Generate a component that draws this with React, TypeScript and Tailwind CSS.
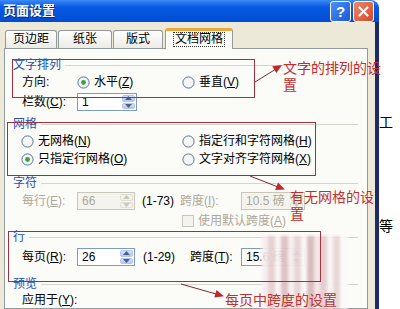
import React from 'react';

function Key({ k }: { k: string }) {
    return <>(<span className="underline">{k}</span>)</>;
}

function Radio({ checked = false }: { checked?: boolean }) {
    return (
        <svg width="13" height="13" viewBox="0 0 13 13" className="shrink-0">
            <circle cx="6.5" cy="6.5" r="5.6" fill="#F5F5F1" stroke="#56739B" strokeWidth="1" />
            {checked && <circle cx="6.5" cy="6.5" r="2.4" fill="#3E9F46" />}
        </svg>
    );
}

function Spinner({ disabled = false }: { disabled?: boolean }) {
    const half = disabled
        ? 'flex-1 flex items-center justify-center rounded-[2px] border border-[#E2E0D6] bg-[#F3F2EC]'
        : 'flex-1 flex items-center justify-center rounded-[2px] border border-[#B4C6EE] bg-linear-to-b from-[#D6E2FB] to-[#B3C7F3]';
    const fill = disabled ? '#C9C7BA' : '#4D6185';
    return (
        <div className="flex flex-col w-[15px] p-px gap-px">
            <div className={half}>
                <svg width="7" height="4" viewBox="0 0 7 4"><path d="M0 4 L3.5 0 L7 4 Z" fill={fill} /></svg>
            </div>
            <div className={half}>
                <svg width="7" height="4" viewBox="0 0 7 4"><path d="M0 0 L3.5 4 L7 0 Z" fill={fill} /></svg>
            </div>
        </div>
    );
}

function Field({ value, width, disabled = false }: { value: string; width: string; disabled?: boolean }) {
    const box = disabled
        ? 'flex h-[18px] items-stretch border border-[#C9C7BA] bg-[#F4F3EE] text-[#ACA899]'
        : 'flex h-[18px] items-stretch border border-[#7F9DB9] bg-white text-black';
    return (
        <div className={`${box} ${width}`}>
            <span className="flex-1 pl-[4px] leading-[16px] whitespace-nowrap overflow-hidden">{value}</span>
            <Spinner disabled={disabled} />
        </div>
    );
}

function Section({ title }: { title: string }) {
    return (
        <div className="flex items-center h-[16px] gap-[4px]">
            <span className="text-[#2750B0]">{title}</span>
            <div className="flex-1 h-px bg-[#D6D5C8]" />
        </div>
    );
}

const stripes = [
    'w-[6px] bg-[#F6EEEE]',
    'w-[7px] bg-[#E6CFD0]',
    'w-[6px] bg-[#FAF6F5]',
    'w-[7px] bg-[#DDBFC2]',
    'w-[6px] bg-[#F7F0EF]',
    'w-[7px] bg-[#E9D4D5]',
    'w-[6px] bg-[#FBF9F8]',
    'w-[7px] bg-[#D8B9BC]',
    'w-[6px] bg-[#F4E8E8]',
    'w-[7px] bg-[#E4CCCD]',
    'w-[6px] bg-[#FAF5F5]',
    'w-[7px] bg-[#E8D6D6]',
    'w-[8px] bg-[#FBFAFA]',
];

const App: React.FC = () => {
    return (
        <div className="relative w-[400px] h-[309px] overflow-hidden bg-white flex text-[12px] leading-[16px] text-black font-['Liberation_Sans','Noto_Sans_CJK_SC',sans-serif]">
            {/* dialog window */}
            <div className="w-[379px] h-full flex flex-col rounded-tr-[8px] overflow-hidden shrink-0">
                <div className="h-[27px] flex items-center justify-between pl-[3px] pr-[5px] bg-linear-to-b from-[#3A8AF7] via-[#0A5BE4] via-30% to-[#004BD2]">
                    <span className="text-white font-bold text-[13px] [text-shadow:1px_1px_0_#0A2A80]">页面设置</span>
                    <div className="flex gap-[2px]">
                        <div className="w-[21px] h-[21px] rounded-[3px] border border-white bg-linear-to-br from-[#4C8DF6] to-[#1B58D8] flex items-center justify-center text-white font-bold text-[15px] leading-none">?</div>
                        <div className="w-[21px] h-[21px] rounded-[3px] border border-white bg-linear-to-br from-[#EC8A66] to-[#D2442A] flex items-center justify-center">
                            <svg width="11" height="11" viewBox="0 0 11 11"><path d="M1.5 1.5 L9.5 9.5 M9.5 1.5 L1.5 9.5" stroke="#fff" strokeWidth="2.2" strokeLinecap="round" /></svg>
                        </div>
                    </div>
                </div>

                <div className="flex-1 flex flex-col bg-[#ECE9D8] pl-[4px] pr-[7px] border-r-[4px] border-r-[#1B2A6B]">
                    {/* tabs */}
                    <div className="mt-[6px] h-[20px] flex items-end gap-[1px] pl-[1px] relative z-10">
                        <div className="w-[52px] h-[18px] border border-b-0 border-[#919B9C] rounded-t-[3px] bg-linear-to-b from-white to-[#ECEBE5] text-center leading-[17px]">页边距</div>
                        <div className="w-[54px] h-[18px] border border-b-0 border-[#919B9C] rounded-t-[3px] bg-linear-to-b from-white to-[#ECEBE5] text-center leading-[17px]">纸张</div>
                        <div className="w-[50px] h-[18px] border border-b-0 border-[#919B9C] rounded-t-[3px] bg-linear-to-b from-white to-[#ECEBE5] text-center leading-[17px]">版式</div>
                        <div className="ml-px w-[68px] h-[21px] -mb-px border-x border-[#919B9C] border-t-[3px] border-t-[#F0A43A] rounded-t-[3px] bg-[#FBFBF8] flex items-start justify-center pt-[1px]">
                            <span className="border border-dotted border-[#333] px-[1px] leading-[13px]">文档网格</span>
                        </div>
                    </div>

                    {/* tab panel */}
                    <div className="flex-1 border border-[#919B9C] bg-[#FBFBF8] pl-[8px] pr-[9px] pt-[8px] overflow-hidden">
                        <Section title="文字排列" />
                        <div className="mt-[1px] h-[16px] flex items-center pl-[9px]">
                            <span className="w-[55px]">方向:</span>
                            <div className="w-[105px] flex items-center gap-[4px]">
                                <Radio checked />
                                <span>水平<Key k="Z" /></span>
                            </div>
                            <div className="flex items-center gap-[4px]">
                                <Radio />
                                <span>垂直<Key k="V" /></span>
                            </div>
                        </div>
                        <div className="mt-[3px] h-[18px] flex items-center pl-[9px]">
                            <span className="w-[55px]">栏数<Key k="C" />:</span>
                            <Field value="1" width="w-[60px]" />
                        </div>

                        <div className="mt-[5px]"><Section title="网格" /></div>
                        <div className="mt-[1px] h-[16px] flex items-center pl-[8px]">
                            <div className="w-[161px] flex items-center gap-[4px]">
                                <Radio />
                                <span>无网格<Key k="N" /></span>
                            </div>
                            <div className="flex items-center gap-[4px]">
                                <Radio />
                                <span>指定行和字符网格<Key k="H" /></span>
                            </div>
                        </div>
                        <div className="mt-[2px] h-[16px] flex items-center pl-[8px]">
                            <div className="w-[161px] flex items-center gap-[4px]">
                                <Radio checked />
                                <span>只指定行网格<Key k="O" /></span>
                            </div>
                            <div className="flex items-center gap-[4px]">
                                <Radio />
                                <span>文字对齐字符网格<Key k="X" /></span>
                            </div>
                        </div>

                        <div className="mt-[8px]"><Section title="字符" /></div>
                        <div className="mt-[1px] h-[18px] flex items-center pl-[9px] whitespace-nowrap">
                            <span className="w-[55px] text-[#ACA899]">每行<Key k="E" />:</span>
                            <Field value="66" width="w-[58px]" disabled />
                            <span className="ml-[7px] w-[38px]">(1-73)</span>
                            <span className="w-[61px] text-[#ACA899]">跨度<Key k="I" />:</span>
                            <Field value="10.5 磅" width="w-[64px]" disabled />
                        </div>
                        <div className="mt-[3px] h-[16px] flex items-center pl-[169px] gap-[4px] text-[#ACA899]">
                            <div className="w-[12px] h-[12px] border border-[#C9C7BA] bg-[#F4F3EE]" />
                            <span>使用默认跨度<Key k="A" /></span>
                        </div>

                        <Section title="行" />
                        <div className="mt-[3px] h-[18px] flex items-center pl-[9px] whitespace-nowrap">
                            <span className="w-[55px]">每页<Key k="R" />:</span>
                            <Field value="26" width="w-[58px]" />
                            <span className="ml-[8px] w-[47px]">(1-29)</span>
                            <span className="w-[51px]">跨度<Key k="T" />:</span>
                            <Field value="15.6 磅" width="w-[64px]" />
                        </div>

                        <div className="mt-[10px]"><Section title="预览" /></div>
                        <div className="h-[16px] flex items-center pl-[9px]">
                            <span>应用于<Key k="Y" />:</span>
                        </div>
                    </div>
                </div>
            </div>

            {/* document text behind the dialog */}
            <div className="flex-1 flex flex-col text-[14px] leading-[16px] pt-[114px]">
                <span>工</span>
                <span className="mt-[88px]">等</span>
            </div>

            {/* blurred watermark */}
            <div className="absolute left-[262px] top-[236px] w-[88px] h-[73px] flex blur-[1.5px] opacity-95">
                {stripes.map((s, i) => (
                    <div key={i} className={s} />
                ))}
            </div>

            {/* annotation boxes */}
            <div className="absolute left-[12px] top-[59px] w-[243px] h-[39px] border-[1.5px] border-[#A3303F]" />
            <div className="absolute left-[7px] top-[122px] w-[309px] h-[54px] border-[1.5px] border-[#A3303F]" />
            <div className="absolute left-[8px] top-[231px] w-[313px] h-[51px] border-[1.5px] border-[#A3303F]" />

            <svg className="absolute inset-0 pointer-events-none" width="400" height="309" viewBox="0 0 400 309">
                <line x1="255" y1="82" x2="276" y2="69" stroke="#7A2A32" strokeWidth="1" />
                <polygon points="282,65 276.4,73.1 272.2,66.3" fill="#C0282C" />
                <line x1="250" y1="176" x2="278" y2="187" stroke="#7A2A32" strokeWidth="1" />
                <polygon points="285,189.5 275.2,190 278,182.6" fill="#C0282C" />
                <line x1="181" y1="284" x2="216" y2="294" stroke="#7A2A32" strokeWidth="1" />
                <polygon points="224,296.3 214.3,297.6 216.5,290" fill="#C0282C" />
            </svg>

            {/* annotation texts */}
            <div className="absolute left-[283px] top-[59px] text-[14px] leading-[17px] text-[#C0302E] font-['Noto_Sans_CJK_SC',sans-serif] flex flex-col">
                <span>文字的排列的设</span>
                <span>置</span>
            </div>
            <div className="absolute left-[290px] top-[188px] text-[14px] leading-[17px] text-[#C0302E] font-['Noto_Sans_CJK_SC',sans-serif] flex flex-col">
                <span>有无网格的设</span>
                <span>置</span>
            </div>
            <div className="absolute left-[225px] top-[291px] text-[14px] leading-[17px] text-[#C0302E] font-['Noto_Sans_CJK_SC',sans-serif]">
                每页中跨度的设置
            </div>
        </div>
    );
};

export default App;
